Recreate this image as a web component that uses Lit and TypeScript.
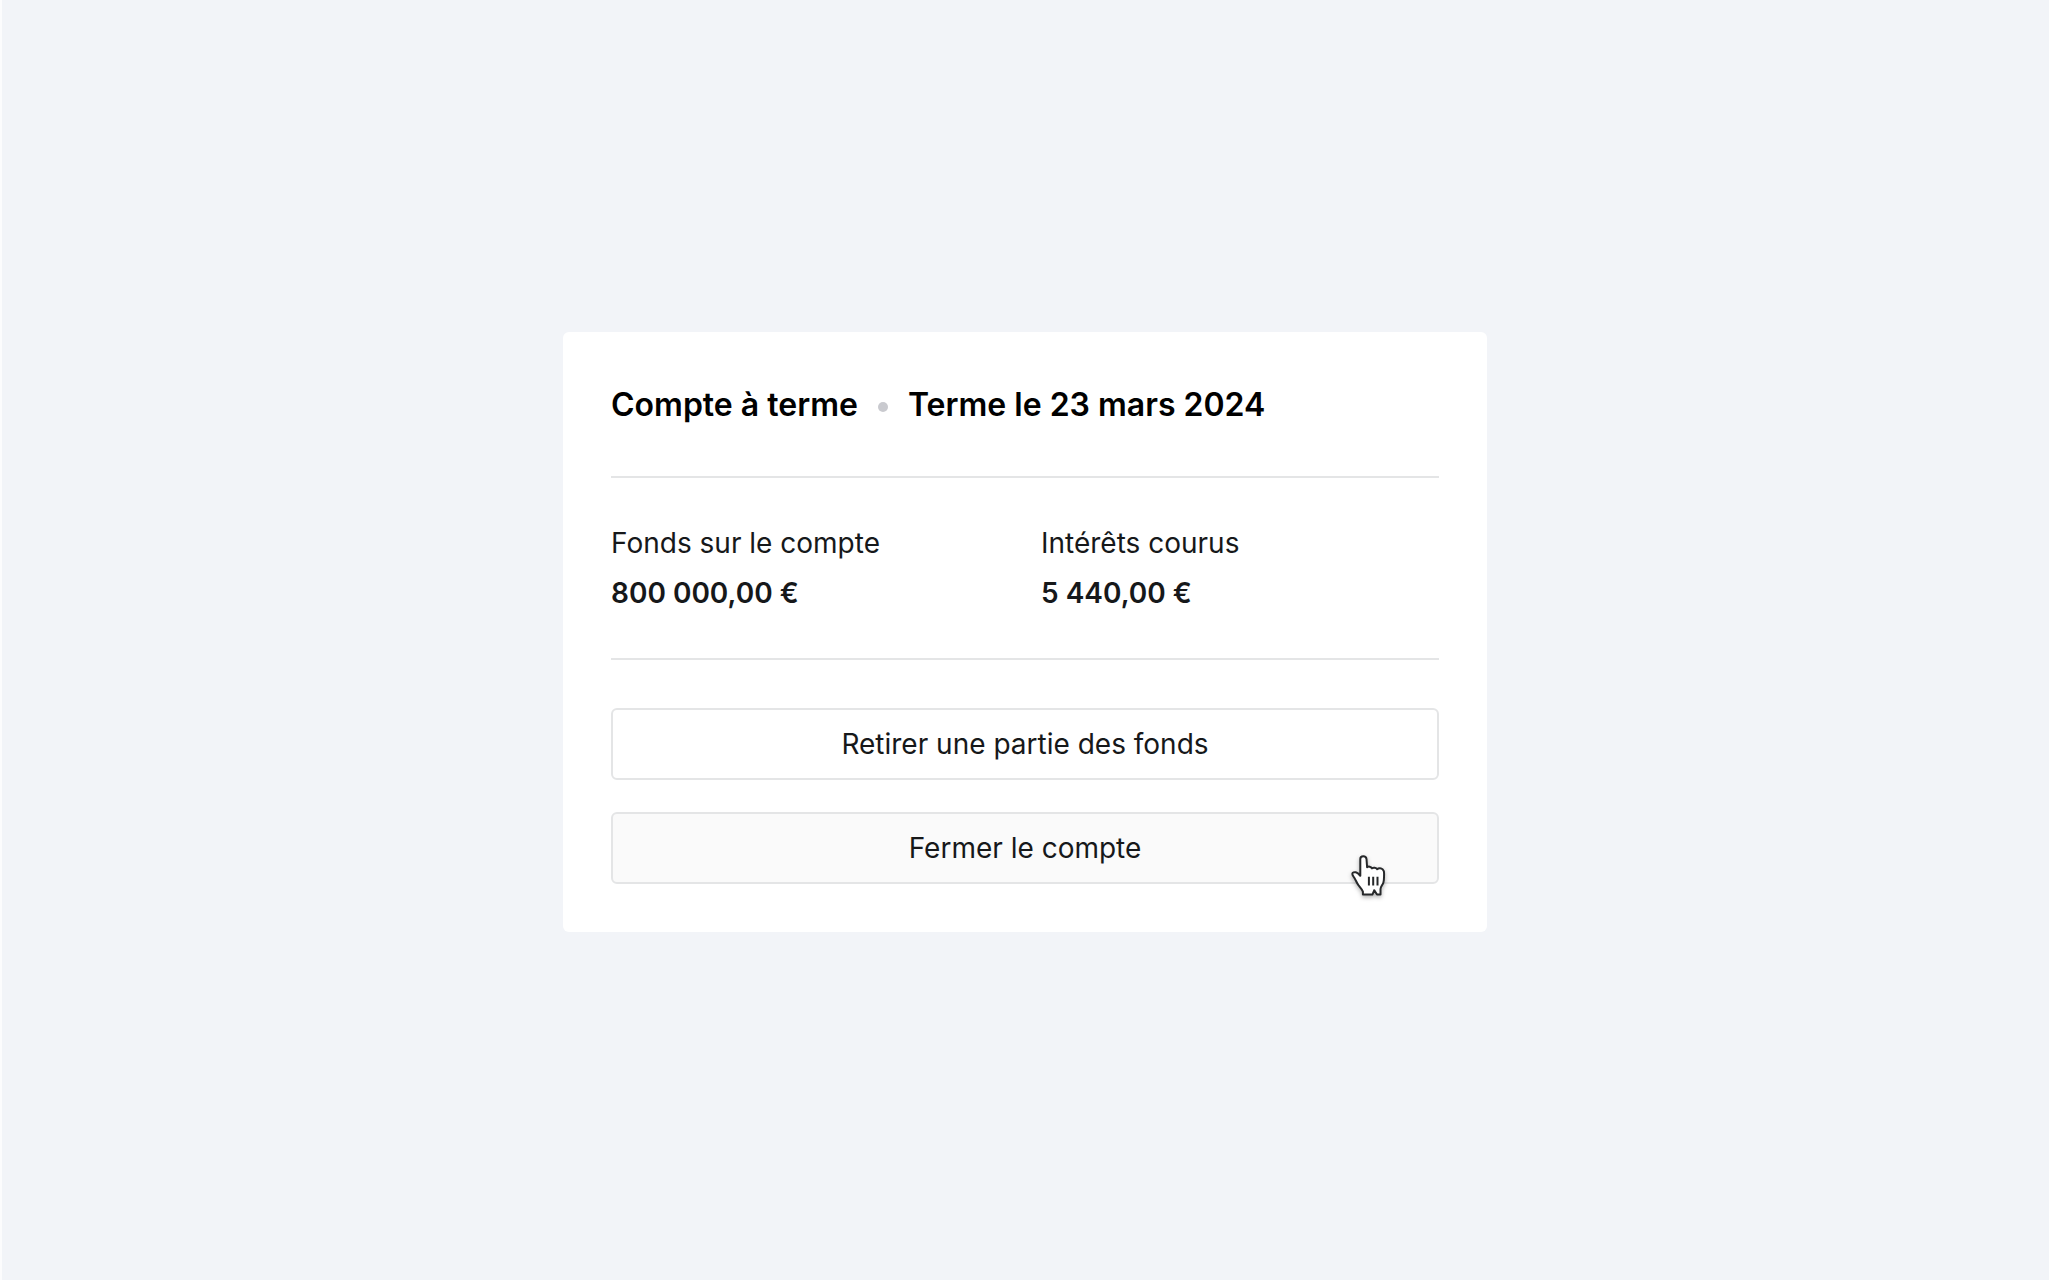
import { LitElement, html, css, svg } from "lit";
import { customElement } from "lit/decorators.js";

const handPointer = svg`
  <path class="hand" d="M11.9 40.6 V37.6 C11 35.2 9.4 33.6 7.6 31.4 C5.6 28.8 5 26.6 3.6 24.2 C2.6 22.6 1.2 21.2 1.3 19.8 C1.5 18.4 3.2 17.9 4.8 18.3 C6.8 18.8 8 20.2 9.3 21.8 V5 C9.3 3.2 10.6 2.3 12.3 2.3 C14 2.3 15.3 3.3 15.5 5 L16.1 13.2 C17.4 12.2 20 12.4 21 14.4 C22.2 13.2 25.2 13.4 26.2 15.2 C27.6 13.9 30.4 14.2 31.8 15.4 C33.2 16.6 33.2 18.4 33.1 20 C33 23 33.2 25.6 32.4 28.4 C31.6 31 29.8 32.4 29.5 35 V40.6 H26 L23.3 36.2 L21.4 40.6 Z"/>
  <path class="fingers" d="M17.9 22.7 V31.5 M22.2 22.7 V31.5 M26.5 22.7 V31.5"/>
`;

@customElement("app-root")
export class AppRoot extends LitElement {
  static styles = css`
    :host {
      display: block;
      font-family: Inter, "Liberation Sans", sans-serif;
      color: #16181a;
    }
    .page {
      box-sizing: border-box;
      min-height: 100vh;
      display: grid;
      grid-template-columns: minmax(0, 924px);
      place-content: center;
      padding-bottom: 16px;
      padding-right: 1px;
      border-left: 2px solid #fcfcfd;
      background: #f2f4f8;
    }
    .card {
      padding: 48px;
      border-radius: 6px;
      background: #fff;
    }
    .title {
      display: flex;
      flex-wrap: wrap;
      align-items: center;
      gap: 20px;
      margin: 0;
      font-size: 32px;
      line-height: 50px;
      font-weight: 600;
      color: #000;
    }
    .dot {
      width: 10px;
      height: 10px;
      margin-top: 4px;
      border-radius: 50%;
      background: #c9cacf;
    }
    .figures {
      display: grid;
      grid-template-columns: 1fr 1fr;
      gap: 32px;
      margin: 46px 0 48px;
      padding: 48px 0;
      border: solid #e4e5e6;
      border-width: 2px 0;
      font-size: 28px;
      line-height: 34px;
    }
    .figure {
      display: grid;
      gap: 16px;
    }
    .name {
      font-weight: 400;
    }
    .amount {
      margin: 0;
      font-weight: 600;
    }
    .actions {
      display: grid;
      gap: 32px;
    }
    .action {
      width: 100%;
      padding: 17px 24px;
      border: 2px solid #e4e5e6;
      border-radius: 6px;
      background: #fff;
      color: inherit;
      font: 400 28px/34px Inter, "Liberation Sans", sans-serif;
      cursor: pointer;
    }
    .action:hover,
    .hovered {
      background: #fafafa;
    }
    .hover-area {
      position: relative;
    }
    .pointer {
      position: absolute;
      right: 52px;
      top: 42px;
      width: 36px;
      height: 44px;
      overflow: visible;
      pointer-events: none;
      filter: drop-shadow(0 2px 2px rgb(0 0 0 / 30%));
    }
    .hand {
      fill: #fff;
      stroke: #26282a;
      stroke-width: 2;
      stroke-linejoin: round;
    }
    .fingers {
      fill: none;
      stroke: #26282a;
      stroke-width: 2;
    }
  `;

  render() {
    return html`
      <main class="page">
        <section class="card">
          <h1 class="title">
            <span>Compte à terme</span>
            <span class="dot"></span>
            <span>Terme le 23 mars 2024</span>
          </h1>
          <dl class="figures">
            <div class="figure">
              <dt class="name">Fonds sur le compte</dt>
              <dd class="amount">800 000,00 €</dd>
            </div>
            <div class="figure">
              <dt class="name">Intérêts courus</dt>
              <dd class="amount">5 440,00 €</dd>
            </div>
          </dl>
          <div class="actions">
            <button class="action" type="button">Retirer une partie des fonds</button>
            <div class="hover-area">
              <button class="action hovered" type="button">Fermer le compte</button>
              <svg class="pointer" viewBox="0 0 36 44" aria-hidden="true">${handPointer}</svg>
            </div>
          </div>
        </section>
      </main>
    `;
  }
}
